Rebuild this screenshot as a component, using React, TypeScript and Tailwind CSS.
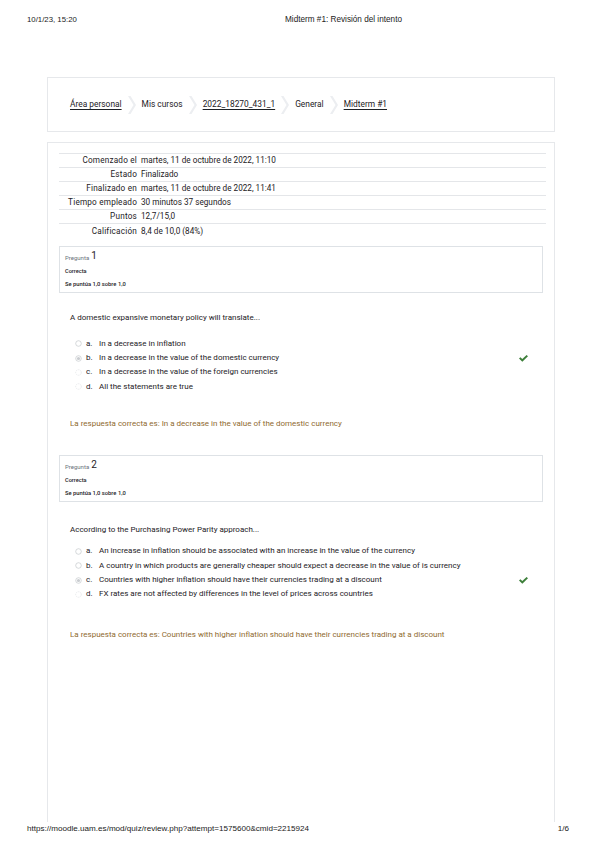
import React from "react";

type Option = { letter: string; text: string; state: "empty" | "checked" | "faint" };

const summary = [
	["Comenzado el", "martes, 11 de octubre de 2022, 11:10"],
	["Estado", "Finalizado"],
	["Finalizado en", "martes, 11 de octubre de 2022, 11:41"],
	["Tiempo empleado", "30 minutos 37 segundos"],
	["Puntos", "12,7/15,0"],
	["Calificación", "8,4 de 10,0 (84%)"],
];

const Separator = () => (
	<svg width="8" height="18" viewBox="0 0 8 18" className="mx-[6px] shrink-0">
		<polygon points="0,0 2.5,0 8,9 2.5,18 0,18 5.5,9" fill="#eceef1" />
	</svg>
);

const Radio = ({ state }: { state: Option["state"] }) => (
	<svg width="7" height="7" viewBox="0 0 7 7" className="shrink-0">
		{state === "faint" ? (
			<circle cx="3.5" cy="3.5" r="2.8" fill="none" stroke="#e3e5e8" strokeWidth="0.8" strokeDasharray="1.2 0.8" />
		) : (
			<circle cx="3.5" cy="3.5" r="2.8" fill="#fff" stroke="#c4c8cc" strokeWidth="0.7" />
		)}
		{state === "checked" && <circle cx="3.5" cy="3.5" r="1.6" fill="#c9ccd0" />}
	</svg>
);

const Check = () => (
	<svg width="9" height="7" viewBox="0 0 9 7">
		<polygon points="0,3.6 1.4,2.3 3.3,4.1 7.6,0 9,1.3 3.3,6.8" fill="#3d7f3a" />
	</svg>
);

const InfoBox = ({ n }: { n: number }) => (
	<div className="mx-[11px] h-[47px] border border-[#dee2e6] px-[5px] pt-[3px] flex flex-col text-[#1d2125]">
		<div className="h-[12px] flex items-end">
			<span className="text-[6px] text-[#6a737b] mr-[2px] leading-[8px]">Pregunta</span>
			<span className="text-[10px] leading-[12px]">{n}</span>
		</div>
		<div className="text-[5.6px] font-medium mt-[5px] leading-[8px]">Correcta</div>
		<div className="text-[5.8px] font-medium mt-[5px] leading-[8px]">Se puntúa 1,0 sobre 1,0</div>
	</div>
);

const Question = ({
	question,
	options,
	correct,
	answer,
	qTop,
	optTop,
	ansTop,
}: {
	question: string;
	options: Option[];
	correct: number;
	answer: string;
	qTop: string;
	optTop: string;
	ansTop: string;
}) => (
	<div className="px-[22px] text-[#1d2125]">
		<p className={`${qTop} text-[8px] leading-[10px]`}>{question}</p>
		<div className={`${optTop} flex flex-col`}>
			{options.map((o, i) => (
				<div key={o.letter} className="h-[14.4px] flex items-center text-[8px] pl-[5px] pr-[4px]">
					<Radio state={o.state} />
					<span className="ml-[4px] w-[13px]">{o.letter}.</span>
					<span className="flex-1">{o.text}</span>
					{i === correct && <Check />}
				</div>
			))}
		</div>
		<p className={`${ansTop} text-[8px] leading-[10px] text-[#8f6a2f]`}>{answer}</p>
	</div>
);

export default function App() {
	return (
		<div className="w-[599px] h-[848px] bg-white flex flex-col font-['Roboto',sans-serif] overflow-hidden">
			<header className="h-[40px] flex items-center pl-[27px] font-['Liberation_Sans',Arial,sans-serif] text-[7.8px] text-[#222]">
				<span className="w-[258px]">10/1/23, 15:20</span>
				<span className="text-[8.2px]">Midterm #1: Revisión del intento</span>
			</header>

			<nav className="mt-[37px] ml-[47px] w-[508px] h-[55px] border border-[#e6e8eb] flex items-center pl-[22px] text-[8.4px] text-[#1d2125]">
				<span className="underline underline-offset-[1.5px]">Área personal</span>
				<Separator />
				<span>Mis cursos</span>
				<Separator />
				<span className="underline underline-offset-[1.5px]">2022_18270_431_1</span>
				<Separator />
				<span>General</span>
				<Separator />
				<span className="underline underline-offset-[1.5px]">Midterm #1</span>
			</nav>

			<main className="mt-[10px] ml-[47px] w-[508px] flex-1 border-t border-l border-r border-[#e6e8eb] pt-[10px]">
				<table className="ml-[11px] w-[487px] text-[8.2px] text-[#1d2125] border-collapse">
					<tbody>
						{summary.map(([k, v]) => (
							<tr key={k} className="h-[14px] border-t border-[#e4e6e9]">
								<td className="w-[82px] text-right pr-[4px] whitespace-nowrap tracking-[0.2px]">{k}</td>
								<td>{v}</td>
							</tr>
						))}
					</tbody>
				</table>

				<div className="mt-[8px]">
					<InfoBox n={1} />
				</div>
				<Question
					qTop="mt-[20px]"
					optTop="mt-[14px]"
					ansTop="mt-[25px]"
					question="A domestic expansive monetary policy will translate..."
					correct={1}
					options={[
						{ letter: "a", text: "In a decrease in inflation", state: "empty" },
						{ letter: "b", text: "In a decrease in the value of the domestic currency", state: "checked" },
						{ letter: "c", text: "In a decrease in the value of the foreign currencies", state: "faint" },
						{ letter: "d", text: "All the statements are true", state: "faint" },
					]}
					answer="La respuesta correcta es: In a decrease in the value of the domestic currency"
				/>

				<div className="mt-[26px]">
					<InfoBox n={2} />
				</div>
				<Question
					qTop="mt-[23px]"
					optTop="mt-[9px]"
					ansTop="mt-[28px]"
					question="According to the Purchasing Power Parity approach..."
					correct={2}
					options={[
						{ letter: "a", text: "An increase in inflation should be associated with an increase in the value of the currency", state: "empty" },
						{ letter: "b", text: "A country in which products are generally cheaper should expect a decrease in the value of is currency", state: "empty" },
						{ letter: "c", text: "Countries with higher inflation should have their currencies trading at a discount", state: "checked" },
						{ letter: "d", text: "FX rates are not affected by differences in the level of prices across countries", state: "faint" },
					]}
					answer="La respuesta correcta es: Countries with higher inflation should have their currencies trading at a discount"
				/>
			</main>

			<footer className="h-[26px] flex justify-between px-[27px] pt-[1px] font-['Liberation_Sans',Arial,sans-serif] text-[8.1px] leading-[12px] text-[#222]">
				<span>https://moodle.uam.es/mod/quiz/review.php?attempt=1575600&amp;cmid=2215924</span>
				<span className="mr-[3px]">1/6</span>
			</footer>
		</div>
	);
}
